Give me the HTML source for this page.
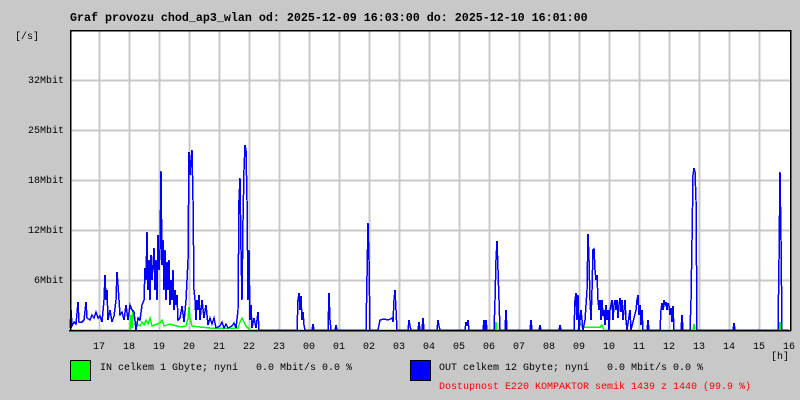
<!DOCTYPE html>
<html><head><meta charset="utf-8"><style>
html,body{margin:0;padding:0;background:#c8c8c8;}
body{width:800px;height:400px;overflow:hidden;position:relative;font-family:"Liberation Mono",monospace;font-size:10px;color:#000;}
.t{position:absolute;white-space:pre;line-height:14px;}
</style></head><body>
<div class="t" style="left:70px;top:11px;font-weight:bold;font-size:11.67px;">Graf provozu chod_ap3_wlan od: 2025-12-09 16:03:00 do: 2025-12-10 16:01:00</div>
<div class="t" style="left:15px;top:31px;">[/s]</div>
<div class="t" style="left:0;width:64px;text-align:right;top:75px;">32Mbit</div>
<div class="t" style="left:0;width:64px;text-align:right;top:125px;">25Mbit</div>
<div class="t" style="left:0;width:64px;text-align:right;top:175px;">18Mbit</div>
<div class="t" style="left:0;width:64px;text-align:right;top:225px;">12Mbit</div>
<div class="t" style="left:0;width:64px;text-align:right;top:275px;">6Mbit</div>
<svg width="800" height="400" style="position:absolute;left:0;top:0" shape-rendering="crispEdges">
<rect x="70" y="30" width="720" height="300" fill="#fff"/>
<g stroke="#c8c8c8" stroke-width="2">
<path d="M99.5,31V330M129.5,31V330M159.5,31V330M189.5,31V330M219.5,31V330M249.5,31V330M279.5,31V330M309.5,31V330M339.5,31V330M369.5,31V330M399.5,31V330M429.5,31V330M459.5,31V330M489.5,31V330M519.5,31V330M549.5,31V330M579.5,31V330M609.5,31V330M639.5,31V330M669.5,31V330M699.5,31V330M729.5,31V330M759.5,31V330"/>
<path d="M64,80.5H790M64,130.5H790M64,180.5H790M64,230.5H790M64,280.5H790"/>
</g>
<path fill="none" stroke="#00ff00" stroke-width="1.5" d="M70,330 L130,330 131,315 132,328 133,310 134,318 136,324 140,326 142,322 144,325 146,320 148,324 150,318 152,326 160,323 162,320 164,326 170,324 180,327 186,326 188,318 189,307 190,318 192,326 200,327 210,328 238,328 240,322 242,318 244,322 246,326 250,330 495,330 496,322 497,330 578,330 580,323 582,327 600,327 602,325 604,330 693,330 694,324 695,330 779,330 780,322 781,330 789,330"/>
<path fill="none" stroke="#0000ff" stroke-width="1.5" d="M70,328 L71,310 72,326 74,322 76,324 78,302 79,322 82,322 84,320 86,302 87,318 90,320 92,315 94,318 96,312 98,318 100,316 102,322 104,300 105,275 106,300 107,290 108,320 110,310 112,322 114,316 116,300 117,272 118,285 119,300 120,315 122,312 124,320 126,305 128,320 130,305 132,310 134,312 136,330 138,318 140,320 142,305 144,300 145,268 146,280 147,232 148,290 149,260 150,300 151,255 152,280 153,265 154,248 155,290 156,260 157,300 158,235 159,270 160,250 161,171 162,265 163,240 164,290 165,250 166,300 167,262 168,290 169,260 170,305 171,280 172,300 173,270 174,310 175,290 176,305 177,295 178,320 180,318 182,306 184,322 186,300 188,260 189,152 190,175 191,160 192,150 193,200 194,290 195,300 196,320 197,300 198,310 199,295 200,320 202,300 204,318 206,305 208,325 210,318 212,324 214,318 216,328 220,326 222,322 224,328 226,324 228,328 232,326 234,323 236,328 238,310 239,200 240,178 241,250 242,300 243,220 244,170 245,145 246,150 247,200 248,300 249,250 250,320 251,305 252,328 254,318 256,328 258,312 259,330 297,330 298,300 299,293 300,310 301,296 302,320 303,312 304,325 305,330 312,330 313,324 314,330 328,330 329,293 330,320 331,330 335,330 336,325 337,330 366,330 368,223 369,260 370,330 378,330 380,320 384,319 388,320 392,318 393,322 394,300 395,290 396,310 397,330 408,330 409,320 410,326 411,330 418,330 419,322 420,330 422,330 423,318 424,330 437,330 438,320 439,326 440,330 465,330 466,322 467,326 468,320 469,330 483,330 484,320 485,330 486,320 487,330 494,330 495,300 496,260 497,241 498,270 499,300 500,330 505,330 506,310 507,330 530,330 531,320 532,330 539,330 540,325 541,330 559,330 560,325 561,330 574,330 575,300 576,293 577,320 578,295 579,330 581,310 583,330 585,320 587,290 588,234 589,260 590,300 591,320 592,290 593,250 594,249 595,270 596,280 597,275 598,300 599,310 600,300 601,320 602,300 603,316 604,310 605,325 606,305 607,320 608,310 609,330 610,310 612,300 613,320 614,305 615,300 616,310 617,300 618,318 619,305 620,298 621,312 622,300 623,320 624,310 625,300 626,320 627,330 630,310 631,330 636,310 637,300 638,295 639,315 640,305 641,325 642,310 643,330 647,330 648,320 649,330 660,330 661,310 662,303 663,310 664,300 665,305 666,302 667,310 668,303 669,306 670,315 671,308 672,322 673,306 674,330 681,330 682,315 683,330 690,330 691,300 692,240 693,175 694,168 695,172 696,200 697,330 733,330 734,323 735,330 778,330 779,260 780,172 781,240 782,330 789,330"/>
<path d="M70.5,30V331M69,330.5H791M70,30.5H790M790.5,30V331" stroke="#000" stroke-width="1.5" fill="none"/>
<rect x="70.5" y="360.5" width="20" height="20" fill="#00ff00" stroke="#000"/>
<rect x="410.5" y="360.5" width="20" height="20" fill="#0000ff" stroke="#000"/>
</svg>
<div class="t" style="left:93px;top:341px;">17</div>
<div class="t" style="left:123px;top:341px;">18</div>
<div class="t" style="left:153px;top:341px;">19</div>
<div class="t" style="left:183px;top:341px;">20</div>
<div class="t" style="left:213px;top:341px;">21</div>
<div class="t" style="left:243px;top:341px;">22</div>
<div class="t" style="left:273px;top:341px;">23</div>
<div class="t" style="left:303px;top:341px;">00</div>
<div class="t" style="left:333px;top:341px;">01</div>
<div class="t" style="left:363px;top:341px;">02</div>
<div class="t" style="left:393px;top:341px;">03</div>
<div class="t" style="left:423px;top:341px;">04</div>
<div class="t" style="left:453px;top:341px;">05</div>
<div class="t" style="left:483px;top:341px;">06</div>
<div class="t" style="left:513px;top:341px;">07</div>
<div class="t" style="left:543px;top:341px;">08</div>
<div class="t" style="left:573px;top:341px;">09</div>
<div class="t" style="left:603px;top:341px;">10</div>
<div class="t" style="left:633px;top:341px;">11</div>
<div class="t" style="left:663px;top:341px;">12</div>
<div class="t" style="left:693px;top:341px;">13</div>
<div class="t" style="left:723px;top:341px;">14</div>
<div class="t" style="left:753px;top:341px;">15</div>
<div class="t" style="left:783px;top:341px;">16</div>
<div class="t" style="left:771px;top:351px;">[h]</div>
<div class="t" style="left:100px;top:362px;">IN celkem 1 Gbyte; nyní   0.0 Mbit/s 0.0 %</div>
<div class="t" style="left:439px;top:362px;">OUT celkem 12 Gbyte; nyní   0.0 Mbit/s 0.0 %</div>
<div class="t" style="left:439px;top:381px;color:#ff0000;">Dostupnost E220 KOMPAKTOR semik 1439 z 1440 (99.9 %)</div>
</body></html>
